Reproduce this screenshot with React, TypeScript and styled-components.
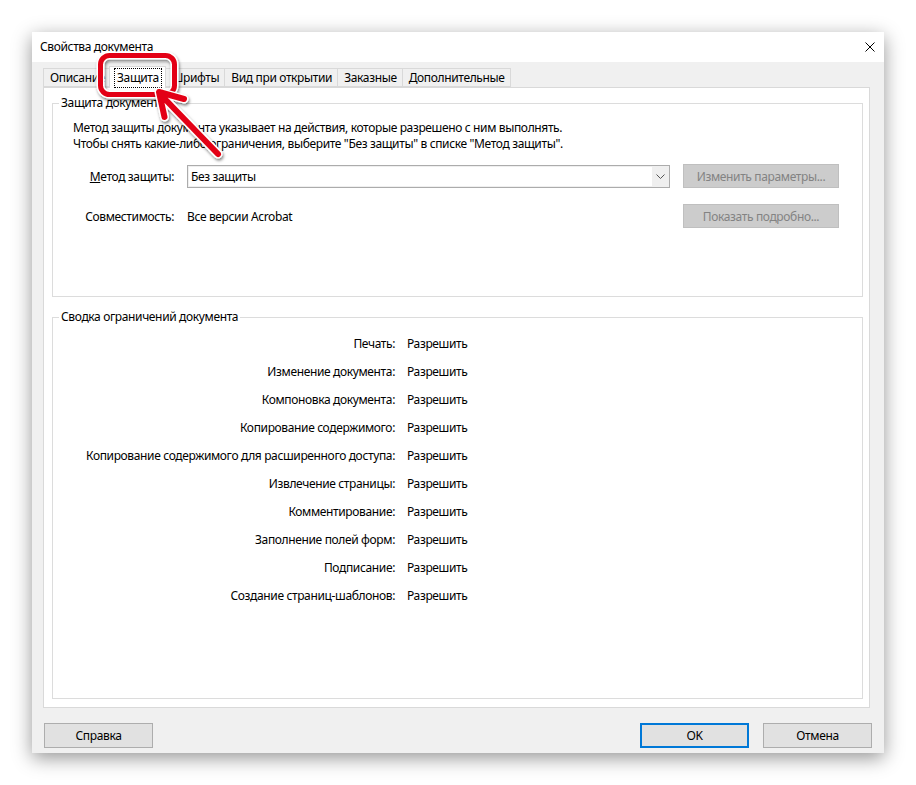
import React from 'react';
import styled, { createGlobalStyle } from 'styled-components';

const Global = createGlobalStyle`
  html, body { margin: 0; padding: 0; background: #fff; }
  body {
    font-family: "Noto Sans", "Open Sans", sans-serif;
    font-size: 12px;
    letter-spacing: -0.36px;
    color: #000;
  }
  * { box-sizing: border-box; }
`;

const Page = styled.div`
  width: 916px;
  height: 785px;
  padding: 32px 0 0 32px;
  overflow: hidden;
`;

const Window = styled.div`
  position: relative;
  width: 852px;
  height: 721px;
  background: #f0f0f0;
  box-shadow: 0 5px 18px rgba(0, 0, 0, 0.42);
  display: flex;
  flex-direction: column;
`;

const TitleBar = styled.div`
  height: 30px;
  background: #fff;
  display: flex;
  align-items: center;
  justify-content: space-between;
  padding: 0 9px 0 8px;
  line-height: 16px;
`;

const CloseBtn = styled.div`
  width: 10px;
  height: 10px;
  display: flex;
`;

const Body = styled.div`
  flex: 1;
  display: flex;
  flex-direction: column;
  padding: 4px 14px 5px 11px;
`;

const TabStrip = styled.div`
  height: 21px;
  display: flex;
  align-items: flex-start;
  position: relative;
  z-index: 1;
`;

const Tab = styled.div<{ $active?: boolean }>`
  height: ${p => (p.$active ? '22px' : '19px')};
  margin-top: ${p => (p.$active ? '0' : '2px')};
  margin-left: ${p => (p.$active ? '-2px' : '-1px')};
  margin-right: ${p => (p.$active ? '-1px' : '0')};
  padding: 0 ${p => (p.$active ? '3px' : '5px')} 0 ${p => (p.$active ? '4px' : '6px')};
  border: 1px solid #d9d9d9;
  border-bottom: ${p => (p.$active ? 'none' : '1px solid #d9d9d9')};
  background: ${p => (p.$active ? '#fff' : '#f0f0f0')};
  display: flex;
  align-items: center;
  white-space: nowrap;
  position: relative;
  z-index: ${p => (p.$active ? 2 : 1)};
  &:first-child { margin-left: 0; }
`;

const FocusLabel = styled.span`
  border: 1px dotted #000;
  padding: 1px 2px;
  line-height: 16px;
`;

const Panel = styled.div`
  flex: 1;
  background: #fff;
  border: 1px solid #d9d9d9;
  padding: 7px 6px 8px 8px;
  display: flex;
  flex-direction: column;
  gap: 12px;
`;

const Group = styled.fieldset<{ $grow?: boolean }>`
  margin: 0;
  padding: 0;
  min-width: 0;
  border: 1px solid #dcdcdc;
  height: ${p => (p.$grow ? 'auto' : '202px')};
  flex: ${p => (p.$grow ? '1' : 'none')};
`;

const Legend = styled.legend`
  margin-left: 6px;
  padding: 0 2px;
  line-height: 16px;
`;

const Intro = styled.p`
  margin: 9px 0 0 20px;
  line-height: 16px;
`;

const FormGrid = styled.div`
  margin-top: 12px;
  display: grid;
  grid-template-columns: 121px 483px 156px;
  grid-auto-rows: 24px;
  column-gap: 13px;
  row-gap: 16px;
  align-items: center;
`;

const FieldLabel = styled.div`
  text-align: right;
  white-space: nowrap;
`;

const Key = styled.span`
  text-decoration: underline;
`;

const Select = styled.div`
  height: 23px;
  border: 1px solid #acacac;
  background: #efefef;
  display: flex;
  align-items: stretch;
`;

const SelectValue = styled.div`
  flex: 1;
  display: flex;
  align-items: center;
  padding-left: 2px;
  margin: 1px 0 1px 1px;
  background: #fff;
`;

const SelectArrow = styled.div`
  width: 17px;
  display: flex;
  align-items: center;
  justify-content: center;
`;

const DisabledButton = styled.div`
  height: 24px;
  background: #cccccc;
  border: 1px solid #bfbfbf;
  color: #838383;
  display: flex;
  align-items: center;
  justify-content: center;
`;

const Value = styled.div`
  white-space: nowrap;
`;

const RightsGrid = styled.div`
  padding-top: 4px;
  display: grid;
  grid-template-columns: 342px auto;
  grid-auto-rows: 28px;
  column-gap: 12px;
  align-items: center;
`;

const Footer = styled.div`
  margin: 15px -2px 0 1px;
  display: flex;
  justify-content: space-between;
`;

const FooterRight = styled.div`
  display: flex;
  gap: 14px;
`;

const Button = styled.div<{ $default?: boolean }>`
  width: 109px;
  height: 25px;
  background: #e1e1e1;
  border: ${p => (p.$default ? '2px solid #0078d7' : '1px solid #adadad')};
  display: flex;
  align-items: center;
  justify-content: center;
`;

const Overlay = styled.svg`
  position: absolute;
  left: 0;
  top: 0;
  pointer-events: none;
  overflow: visible;
  z-index: 5;
`;

const rights = [
  'Печать:',
  'Изменение документа:',
  'Компоновка документа:',
  'Копирование содержимого:',
  'Копирование содержимого для расширенного доступа:',
  'Извлечение страницы:',
  'Комментирование:',
  'Заполнение полей форм:',
  'Подписание:',
  'Создание страниц-шаблонов:',
];

const tabs = ['Описание', 'Защита', 'Шрифты', 'Вид при открытии', 'Заказные', 'Дополнительные'];

export default function App() {
  return (
    <Page>
      <Global />
      <Window>
        <TitleBar>
          <span>Свойства документа</span>
          <CloseBtn>
            <svg width="10" height="10" viewBox="0 0 10 10">
              <path d="M0.5 0.5 L9.5 9.5 M9.5 0.5 L0.5 9.5" stroke="#000" strokeWidth="1" fill="none" />
            </svg>
          </CloseBtn>
        </TitleBar>
        <Body>
          <TabStrip>
            {tabs.map(t =>
              t === 'Защита' ? (
                <Tab key={t} $active>
                  <FocusLabel>{t}</FocusLabel>
                </Tab>
              ) : (
                <Tab key={t}>{t}</Tab>
              )
            )}
          </TabStrip>
          <Panel>
            <Group>
              <Legend>Защита документа</Legend>
              <Intro>
                Метод защиты документа указывает на действия, которые разрешено с ним выполнять.
                <br />
                Чтобы снять какие-либо ограничения, выберите "Без защиты" в списке "Метод защиты".
              </Intro>
              <FormGrid>
                <FieldLabel>
                  <Key>М</Key>етод защиты:
                </FieldLabel>
                <Select>
                  <SelectValue>Без защиты</SelectValue>
                  <SelectArrow>
                    <svg width="9" height="5" viewBox="0 0 9 5">
                      <path d="M0.5 0.5 L4.5 4.5 L8.5 0.5" stroke="#555" strokeWidth="1" fill="none" />
                    </svg>
                  </SelectArrow>
                </Select>
                <DisabledButton>Изменить параметры...</DisabledButton>
                <FieldLabel>Совместимость:</FieldLabel>
                <Value>Все версии Acrobat</Value>
                <DisabledButton>Показать подробно...</DisabledButton>
              </FormGrid>
            </Group>
            <Group $grow>
              <Legend>Сводка ограничений документа</Legend>
              <RightsGrid>
                {rights.map(r => (
                  <React.Fragment key={r}>
                    <FieldLabel>{r}</FieldLabel>
                    <Value>Разрешить</Value>
                  </React.Fragment>
                ))}
              </RightsGrid>
            </Group>
          </Panel>
          <Footer>
            <Button>Справка</Button>
            <FooterRight>
              <Button $default>OK</Button>
              <Button>Отмена</Button>
            </FooterRight>
          </Footer>
        </Body>
        <Overlay width="852" height="721" viewBox="32 32 852 721">
          <defs>
            <filter id="sh" x="-30%" y="-30%" width="160%" height="160%">
              <feDropShadow dx="1" dy="2" stdDeviation="1.6" floodColor="#000" floodOpacity="0.5" />
            </filter>
          </defs>
          <g filter="url(#sh)">
            <rect x="100.5" y="55.5" width="74" height="39" rx="9" fill="none" stroke="#fff" strokeWidth="8" />
            <rect x="100.5" y="55.5" width="74" height="39" rx="9" fill="none" stroke="#e30613" strokeWidth="5" />
          </g>
          <g filter="url(#sh)" strokeLinecap="round" strokeLinejoin="round" fill="none">
            <path d="M218 154 L161 95 M184 99 L159 92 L164.5 117" stroke="#fff" strokeWidth="9" />
            <path d="M218 154 L161 95 M184 99 L159 92 L164.5 117" stroke="#e30613" strokeWidth="6" />
          </g>
        </Overlay>
      </Window>
    </Page>
  );
}
